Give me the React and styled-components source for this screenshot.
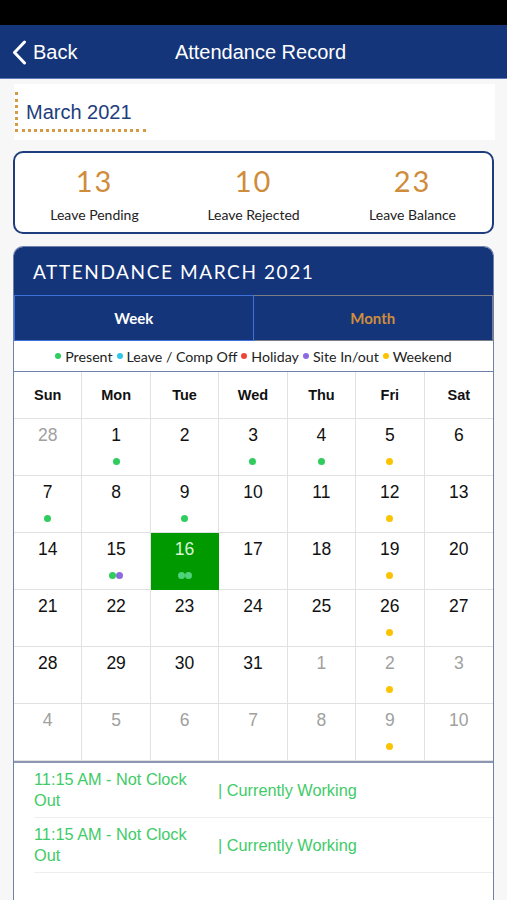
import React from "react";
import styled, { createGlobalStyle, css } from "styled-components";

const NAVY = "#15357a";
const ORANGE = "#cf8d3c";
const GRID = "#e1e1e1";
const CARD_EDGE = "#6f80ad";

const GlobalStyle = createGlobalStyle`
  body {
    margin: 0;
    background: #f7f7f7;
    font-family: "Liberation Sans", Arial, sans-serif;
  }
`;

const Page = styled.div`
  width: 507px;
  height: 900px;
  overflow: hidden;
  display: flex;
  flex-direction: column;
  & > * {
    flex-shrink: 0;
  }
`;

const StatusBar = styled.div`
  height: 25px;
  background: #000;
`;

const NavBar = styled.div`
  height: 54px;
  background: ${NAVY};
  border-bottom: 1px solid #5d79b8;
  display: grid;
  grid-template-columns: 1fr auto 1fr;
  align-items: center;
  color: #fff;
  padding-top: 2px;
  box-sizing: border-box;
`;

const BackButton = styled.div`
  display: flex;
  align-items: center;
  gap: 6px;
  padding-left: 12px;
  font-size: 20px;
`;

const Title = styled.div`
  font-size: 20px;
  padding-left: 14px;
`;

const Content = styled.div`
  padding: 5px 13px 0 14px;
  display: flex;
  flex-direction: column;
`;

const MonthBox = styled.div`
  height: 56px;
  background: #fff;
  margin-right: -1px;
  padding: 8px 0 0 1px;
  box-sizing: border-box;
`;

const MonthLabel = styled.div`
  display: inline-block;
  padding: 9px 14px 5px 8px;
  border-left: 3px dotted #d59a45;
  border-bottom: 3px dotted #d59a45;
  color: #1e3d7c;
  font-size: 20px;
`;

const StatsCard = styled.div`
  margin: 11px 0 0 -1px;
  height: 83px;
  box-sizing: border-box;
  border: 2px solid #1d3d7d;
  border-radius: 10px;
  background: #fff;
  display: grid;
  grid-template-columns: repeat(3, 1fr);
  font-family: Lato, "Open Sans", sans-serif;
`;

const Stat = styled.div`
  display: flex;
  flex-direction: column;
  align-items: center;
  padding-top: 10px;
`;

const StatValue = styled.div`
  font-size: 29px;
  letter-spacing: 2px;
  color: ${ORANGE};
  line-height: 36px;
`;

const StatLabel = styled.div`
  margin-top: 7px;
  font-size: 14px;
  color: #222;
`;

const CalendarCard = styled.div`
  margin: 12px 0 0 -1px;
  border: 1.5px solid ${CARD_EDGE};
  border-bottom: none;
  border-radius: 10px 10px 0 0;
  background: #fff;
  overflow: hidden;
`;

const CalendarHeader = styled.div`
  height: 48px;
  background: ${NAVY};
  color: #fff;
  display: flex;
  align-items: center;
  padding-left: 19px;
  font-family: Lato, "Open Sans", sans-serif;
  font-size: 19px;
  letter-spacing: 1.6px;
`;

const Tabs = styled.div`
  display: grid;
  grid-template-columns: 1fr 1fr;
  height: 46px;
`;

const Tab = styled.div`
  background: ${NAVY};
  display: flex;
  align-items: center;
  justify-content: center;
  font-family: Lato, "Open Sans", sans-serif;
  font-weight: 700;
  font-size: 15px;
  border: 1.5px solid;
  ${(p) =>
    p.active
      ? css`
          color: #fff;
          border-color: #3f72d8;
        `
      : css`
          color: ${ORANGE};
          border-color: #7b7c84;
          border-left: none;
        `}
`;

const Legend = styled.div`
  height: 30px;
  display: flex;
  align-items: center;
  justify-content: center;
  gap: 4px;
  font-family: Lato, "Open Sans", sans-serif;
  font-size: 14.2px;
  color: #222;
  border-bottom: 1.5px solid ${CARD_EDGE};
`;

const LegendItem = styled.span`
  display: flex;
  align-items: center;
  gap: 4px;
`;

const Dot = styled.span`
  width: ${(p) => p.size || 7}px;
  height: ${(p) => p.size || 7}px;
  border-radius: 50%;
  background: ${(p) => p.color};
  display: inline-block;
`;

const Grid = styled.div`
  display: grid;
  grid-template-columns: repeat(7, 1fr);
  border-bottom: 2px solid #8d97b3;
`;

const DayName = styled.div`
  height: 46px;
  display: flex;
  align-items: center;
  justify-content: center;
  font-weight: 700;
  font-size: 14.5px;
  color: #111;
  border-right: 1.5px solid ${GRID};
  border-bottom: 1.5px solid ${GRID};
  &:nth-child(7n) {
    border-right: none;
  }
`;

const Cell = styled.div`
  height: 57px;
  box-sizing: border-box;
  display: flex;
  flex-direction: column;
  align-items: center;
  padding-top: 6px;
  border-right: 1.5px solid ${GRID};
  border-bottom: 1.5px solid ${GRID};
  &:nth-child(7n) {
    border-right: none;
  }
  ${(p) =>
    p.today &&
    css`
      background: #009a00;
      border-color: #009a00;
    `}
`;

const DayNumber = styled.div`
  font-size: 17.5px;
  line-height: 20px;
  color: ${(p) => (p.muted ? "#a0a0a0" : p.today ? "#d8f5d8" : "#111")};
`;

const Dots = styled.div`
  margin-top: 13px;
  height: 8px;
  display: flex;
`;

const EntryList = styled.div`
  padding-left: 20px;
  height: 200px;
`;

const Entry = styled.div`
  height: 54px;
  display: grid;
  grid-template-columns: 184px 1fr;
  align-items: center;
  border-bottom: 1.5px solid #eeeeee;
  color: #3fcb68;
  font-size: 16.3px;
  line-height: 21px;
`;

const EntryTime = styled.span`
  max-width: 165px;
`;

const GREEN = "#2fcc5e";
const YELLOW = "#fcc400";
const PURPLE = "#8a6be0";

const dots = {
  "0-1": [GREEN],
  "0-3": [GREEN],
  "0-4": [GREEN],
  "0-5": [YELLOW],
  "0-7": [GREEN],
  "0-9": [GREEN],
  "0-12": [YELLOW],
  "0-15": [GREEN, PURPLE],
  "0-16": ["#4fd27a", "#4fd27a"],
  "0-19": [YELLOW],
  "0-26": [YELLOW],
  "1-2": [YELLOW],
  "1-9": [YELLOW],
};

const days = [{ n: 28, m: -1 }];
for (let i = 1; i <= 31; i++) days.push({ n: i, m: 0 });
for (let i = 1; i <= 10; i++) days.push({ n: i, m: 1 });

const legend = [
  ["Present", GREEN],
  ["Leave / Comp Off", "#2ec7e6"],
  ["Holiday", "#f04438"],
  ["Site In/out", PURPLE],
  ["Weekend", YELLOW],
];

function App() {
  return (
    <Page>
      <GlobalStyle />
      <StatusBar />
      <NavBar>
        <BackButton>
          <svg width="15" height="25" viewBox="0 0 15 25">
            <path
              d="M12.5 2 L2.5 12.5 L12.5 23"
              fill="none"
              stroke="#fff"
              strokeWidth="3"
              strokeLinecap="round"
              strokeLinejoin="round"
            />
          </svg>
          Back
        </BackButton>
        <Title>Attendance Record</Title>
        <div />
      </NavBar>
      <Content>
        <MonthBox>
          <MonthLabel>March 2021</MonthLabel>
        </MonthBox>
        <StatsCard>
          {[
            ["13", "Leave Pending"],
            ["10", "Leave Rejected"],
            ["23", "Leave Balance"],
          ].map(([v, l]) => (
            <Stat key={l}>
              <StatValue>{v}</StatValue>
              <StatLabel>{l}</StatLabel>
            </Stat>
          ))}
        </StatsCard>
        <CalendarCard>
          <CalendarHeader>ATTENDANCE MARCH 2021</CalendarHeader>
          <Tabs>
            <Tab active>Week</Tab>
            <Tab>Month</Tab>
          </Tabs>
          <Legend>
            {legend.map(([l, c]) => (
              <LegendItem key={l}>
                <Dot color={c} size={6} />
                {l}
              </LegendItem>
            ))}
          </Legend>
          <Grid>
            {["Sun", "Mon", "Tue", "Wed", "Thu", "Fri", "Sat"].map((d) => (
              <DayName key={d}>{d}</DayName>
            ))}
            {days.map((d, i) => {
              const today = d.m === 0 && d.n === 16;
              const ds = dots[`${d.m}-${d.n}`] || [];
              return (
                <Cell key={i} today={today}>
                  <DayNumber muted={d.m !== 0} today={today}>
                    {d.n}
                  </DayNumber>
                  <Dots>
                    {ds.map((c, j) => (
                      <Dot key={j} color={c} />
                    ))}
                  </Dots>
                </Cell>
              );
            })}
          </Grid>
          <EntryList>
            {[0, 1].map((k) => (
              <Entry key={k}>
                <EntryTime>11:15 AM - Not Clock Out</EntryTime>
                <span>| Currently Working</span>
              </Entry>
            ))}
          </EntryList>
        </CalendarCard>
      </Content>
    </Page>
  );
}

export default App;
